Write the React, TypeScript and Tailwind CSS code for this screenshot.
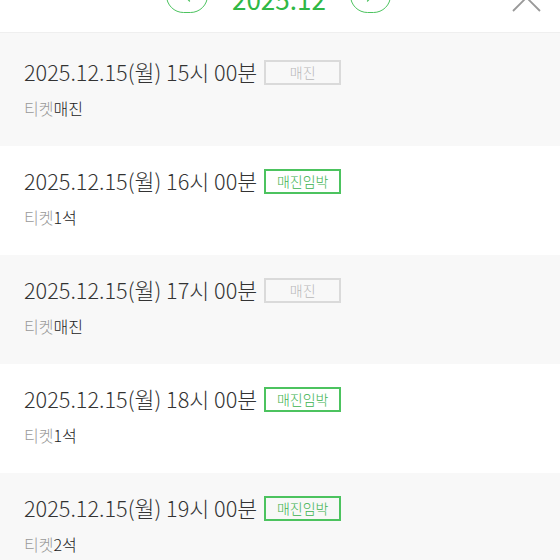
import { ChevronLeft, ChevronRight } from 'lucide-react';

type Slot = {
  hour: string;
  status: 'soldout' | 'few';
  remain: string;
};

const slots: Slot[] = [
  { hour: '15', status: 'soldout', remain: '매진' },
  { hour: '16', status: 'few', remain: '1석' },
  { hour: '17', status: 'soldout', remain: '매진' },
  { hour: '18', status: 'few', remain: '1석' },
  { hour: '19', status: 'few', remain: '2석' },
];

function Badge({ status }: { status: Slot['status'] }) {
  if (status === 'soldout') {
    return (
      <span className="ml-[7px] inline-flex h-[25px] w-[77px] items-center justify-center border-2 border-[#dadada] text-[14px] font-light text-[#b8b8b8]">
        매진
      </span>
    );
  }
  return (
    <span className="ml-[7px] inline-flex h-[25px] w-[77px] items-center justify-center border-2 border-[#4cc35f] text-[14px] font-light text-[#3cb24f]">
      매진임박
    </span>
  );
}

export default function App() {
  return (
    <div
      className="h-[560px] w-[560px] overflow-hidden bg-white"
      style={{ fontFamily: '"Noto Sans CJK KR", "Noto Sans", sans-serif' }}
    >
      {/* Header (scrolled partly out of view) */}
      <div className="relative h-[33px] overflow-hidden border-b border-[#efefef]">
        <div className="absolute left-[166px] top-[-22px] flex items-center">
          <button className="flex h-[35px] w-[42px] items-center justify-center rounded-full border border-[#4cc35f] text-[#4cc35f]">
            <ChevronLeft className="h-5 w-5" strokeWidth={1.5} />
          </button>
          <span className="mx-[24px] mt-[6px] text-[26px] leading-none text-[#2fb845]">2025.12</span>
          <button className="flex h-[35px] w-[41px] items-center justify-center rounded-full border border-[#4cc35f] text-[#4cc35f]">
            <ChevronRight className="h-5 w-5" strokeWidth={1.5} />
          </button>
        </div>
        <svg className="absolute left-[510px] top-[-20px]" width="34" height="34" viewBox="0 0 34 34" fill="none">
          <path d="M3 4 L30 31 M30 4 L3 31" stroke="#999" strokeWidth="1.8" />
        </svg>
      </div>

      {/* Time slots */}
      <div className="flex flex-col">
        {slots.map((s, i) => (
          <div
            key={s.hour}
            className={
              (i % 2 === 0 ? 'bg-[#f8f8f8] ' : 'bg-white ') +
              (i === 0 ? 'h-[113px] pt-[26px] ' : 'h-[109px] pt-[22px] ') +
              'px-6'
            }
          >
            <div className="flex items-center">
              <span className="text-[21.7px] font-light leading-[26px] text-[#333]">
                2025.12.15(월) {s.hour}시 00분
              </span>
              <Badge status={s.status} />
            </div>
            <div className="mt-[13px] text-[16px] font-light leading-5">
              <span className="text-[#999]">티켓</span>
              <span className="text-[#222]">{s.remain}</span>
            </div>
          </div>
        ))}
      </div>
    </div>
  );
}
